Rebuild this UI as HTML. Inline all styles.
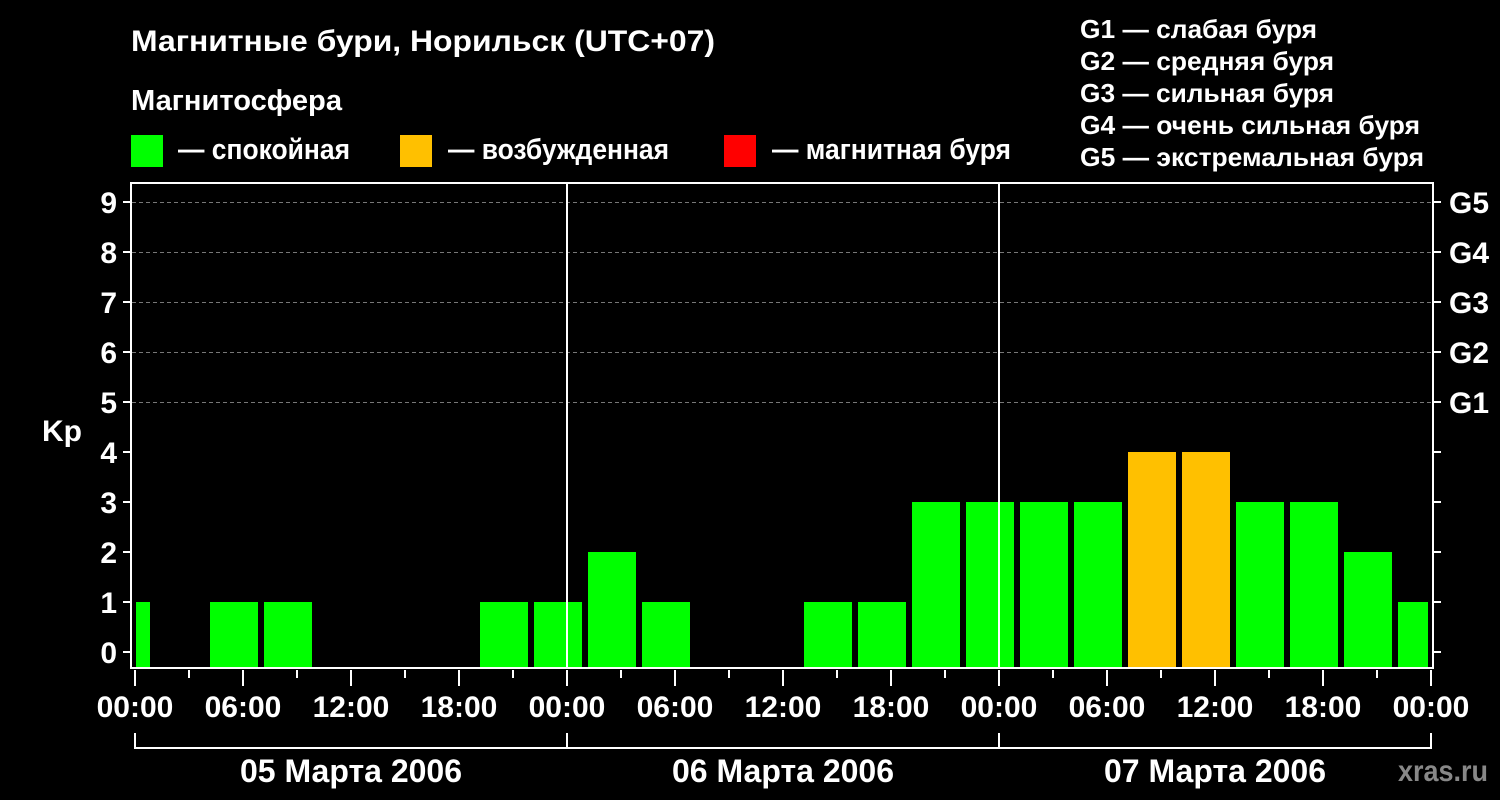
<!DOCTYPE html>
<html><head><meta charset="utf-8"><style>
html,body{margin:0;padding:0;background:#000;width:1500px;height:800px;overflow:hidden}
svg{display:block}
text{font-family:"Liberation Sans",sans-serif;font-weight:bold;fill:#fff}
</style></head><body>
<svg width="1500" height="800" xmlns="http://www.w3.org/2000/svg">
<rect width="1500" height="800" fill="#000"/>
<text x="131" y="51" font-size="30" textLength="584" lengthAdjust="spacingAndGlyphs">Магнитные бури, Норильск (UTC+07)</text>
<text x="131" y="110" font-size="29" textLength="211" lengthAdjust="spacingAndGlyphs">Магнитосфера</text>
<rect x="131" y="135" width="32" height="32" fill="#00ff00"/>
<text x="178" y="159" font-size="29" textLength="172" lengthAdjust="spacingAndGlyphs">— спокойная</text>
<rect x="400" y="135" width="32" height="32" fill="#ffc000"/>
<text x="448" y="159" font-size="29" textLength="221" lengthAdjust="spacingAndGlyphs">— возбужденная</text>
<rect x="724" y="135" width="32" height="32" fill="#ff0000"/>
<text x="772" y="159" font-size="29" textLength="239" lengthAdjust="spacingAndGlyphs">— магнитная буря</text>
<g font-size="26">
<text x="1080" y="38" textLength="237" lengthAdjust="spacingAndGlyphs">G1 — слабая буря</text>
<text x="1080" y="70" textLength="254" lengthAdjust="spacingAndGlyphs">G2 — средняя буря</text>
<text x="1080" y="102" textLength="254" lengthAdjust="spacingAndGlyphs">G3 — сильная буря</text>
<text x="1080" y="134" textLength="340" lengthAdjust="spacingAndGlyphs">G4 — очень сильная буря</text>
<text x="1080" y="166" textLength="344" lengthAdjust="spacingAndGlyphs">G5 — экстремальная буря</text>
</g>
<g stroke="#777" stroke-dasharray="4,3" stroke-width="1">
<line x1="132" y1="202.5" x2="1432" y2="202.5"/>
<line x1="132" y1="252.5" x2="1432" y2="252.5"/>
<line x1="132" y1="302.5" x2="1432" y2="302.5"/>
<line x1="132" y1="352.5" x2="1432" y2="352.5"/>
<line x1="132" y1="402.5" x2="1432" y2="402.5"/>
</g>
<g fill="#00ff00">
<rect x="136" y="602" width="14" height="66"/>
<rect x="210" y="602" width="48" height="66"/>
<rect x="264" y="602" width="48" height="66"/>
<rect x="480" y="602" width="48" height="66"/>
<rect x="534" y="602" width="48" height="66"/>
<rect x="588" y="552" width="48" height="116"/>
<rect x="642" y="602" width="48" height="66"/>
<rect x="804" y="602" width="48" height="66"/>
<rect x="858" y="602" width="48" height="66"/>
<rect x="912" y="502" width="48" height="166"/>
<rect x="966" y="502" width="48" height="166"/>
<rect x="1020" y="502" width="48" height="166"/>
<rect x="1074" y="502" width="48" height="166"/>
<rect x="1236" y="502" width="48" height="166"/>
<rect x="1290" y="502" width="48" height="166"/>
<rect x="1344" y="552" width="48" height="116"/>
<rect x="1398" y="602" width="30" height="66"/>
</g>
<g fill="#ffc000">
<rect x="1128" y="452" width="48" height="216"/>
<rect x="1182" y="452" width="48" height="216"/>
</g>
<g stroke="#fff" stroke-width="2" fill="none">
<rect x="131" y="183" width="1302" height="485"/>
<line x1="567" y1="183" x2="567" y2="668"/>
<line x1="999" y1="183" x2="999" y2="668"/>
</g>
<g stroke="#fff" stroke-width="2">
<line x1="123" y1="202" x2="131" y2="202"/><line x1="123" y1="252" x2="131" y2="252"/>
<line x1="123" y1="302" x2="131" y2="302"/><line x1="123" y1="352" x2="131" y2="352"/>
<line x1="123" y1="402" x2="131" y2="402"/><line x1="123" y1="452" x2="131" y2="452"/>
<line x1="123" y1="502" x2="131" y2="502"/><line x1="123" y1="552" x2="131" y2="552"/>
<line x1="123" y1="602" x2="131" y2="602"/><line x1="123" y1="652" x2="131" y2="652"/>
<line x1="1433" y1="202" x2="1441" y2="202"/><line x1="1433" y1="252" x2="1441" y2="252"/>
<line x1="1433" y1="302" x2="1441" y2="302"/><line x1="1433" y1="352" x2="1441" y2="352"/>
<line x1="1433" y1="402" x2="1441" y2="402"/><line x1="1433" y1="452" x2="1441" y2="452"/>
<line x1="1433" y1="502" x2="1441" y2="502"/><line x1="1433" y1="552" x2="1441" y2="552"/>
<line x1="1433" y1="602" x2="1441" y2="602"/><line x1="1433" y1="652" x2="1441" y2="652"/>
</g>
<g stroke="#fff" stroke-width="2">
<line x1="135" y1="670" x2="135" y2="686"/><line x1="189" y1="670" x2="189" y2="678"/>
<line x1="243" y1="670" x2="243" y2="686"/><line x1="297" y1="670" x2="297" y2="678"/>
<line x1="351" y1="670" x2="351" y2="686"/><line x1="405" y1="670" x2="405" y2="678"/>
<line x1="459" y1="670" x2="459" y2="686"/><line x1="513" y1="670" x2="513" y2="678"/>
<line x1="567" y1="670" x2="567" y2="686"/><line x1="621" y1="670" x2="621" y2="678"/>
<line x1="675" y1="670" x2="675" y2="686"/><line x1="729" y1="670" x2="729" y2="678"/>
<line x1="783" y1="670" x2="783" y2="686"/><line x1="837" y1="670" x2="837" y2="678"/>
<line x1="891" y1="670" x2="891" y2="686"/><line x1="945" y1="670" x2="945" y2="678"/>
<line x1="999" y1="670" x2="999" y2="686"/><line x1="1053" y1="670" x2="1053" y2="678"/>
<line x1="1107" y1="670" x2="1107" y2="686"/><line x1="1161" y1="670" x2="1161" y2="678"/>
<line x1="1215" y1="670" x2="1215" y2="686"/><line x1="1269" y1="670" x2="1269" y2="678"/>
<line x1="1323" y1="670" x2="1323" y2="686"/><line x1="1377" y1="670" x2="1377" y2="678"/>
<line x1="1431" y1="670" x2="1431" y2="686"/>
<polyline points="135,733 135,748 1431,748 1431,733" fill="none"/>
<line x1="567" y1="733" x2="567" y2="748"/>
<line x1="999" y1="733" x2="999" y2="748"/>
</g>
<g font-size="30" text-anchor="end">
<text x="117" y="213">9</text><text x="117" y="263">8</text><text x="117" y="313">7</text>
<text x="117" y="363">6</text><text x="117" y="413">5</text><text x="117" y="463">4</text>
<text x="117" y="513">3</text><text x="117" y="563">2</text><text x="117" y="613">1</text>
<text x="117" y="663">0</text>
</g>
<text x="42" y="441" font-size="30">Kp</text>
<g font-size="30">
<text x="1449" y="213">G5</text><text x="1449" y="263">G4</text><text x="1449" y="313">G3</text>
<text x="1449" y="363">G2</text><text x="1449" y="413">G1</text>
</g>
<g font-size="30" text-anchor="middle">
<text x="135" y="717">00:00</text><text x="243" y="717">06:00</text><text x="351" y="717">12:00</text>
<text x="459" y="717">18:00</text><text x="567" y="717">00:00</text><text x="675" y="717">06:00</text>
<text x="783" y="717">12:00</text><text x="891" y="717">18:00</text><text x="999" y="717">00:00</text>
<text x="1107" y="717">06:00</text><text x="1215" y="717">12:00</text><text x="1323" y="717">18:00</text>
<text x="1431" y="717">00:00</text>
<text x="351" y="782" font-size="32">05 Марта 2006</text>
<text x="783" y="782" font-size="32">06 Марта 2006</text>
<text x="1215" y="782" font-size="32">07 Марта 2006</text>
</g>
<text x="1398" y="781" font-size="30" textLength="90" lengthAdjust="spacingAndGlyphs" style="fill:#888">xras.ru</text>
</svg>
</body></html>
